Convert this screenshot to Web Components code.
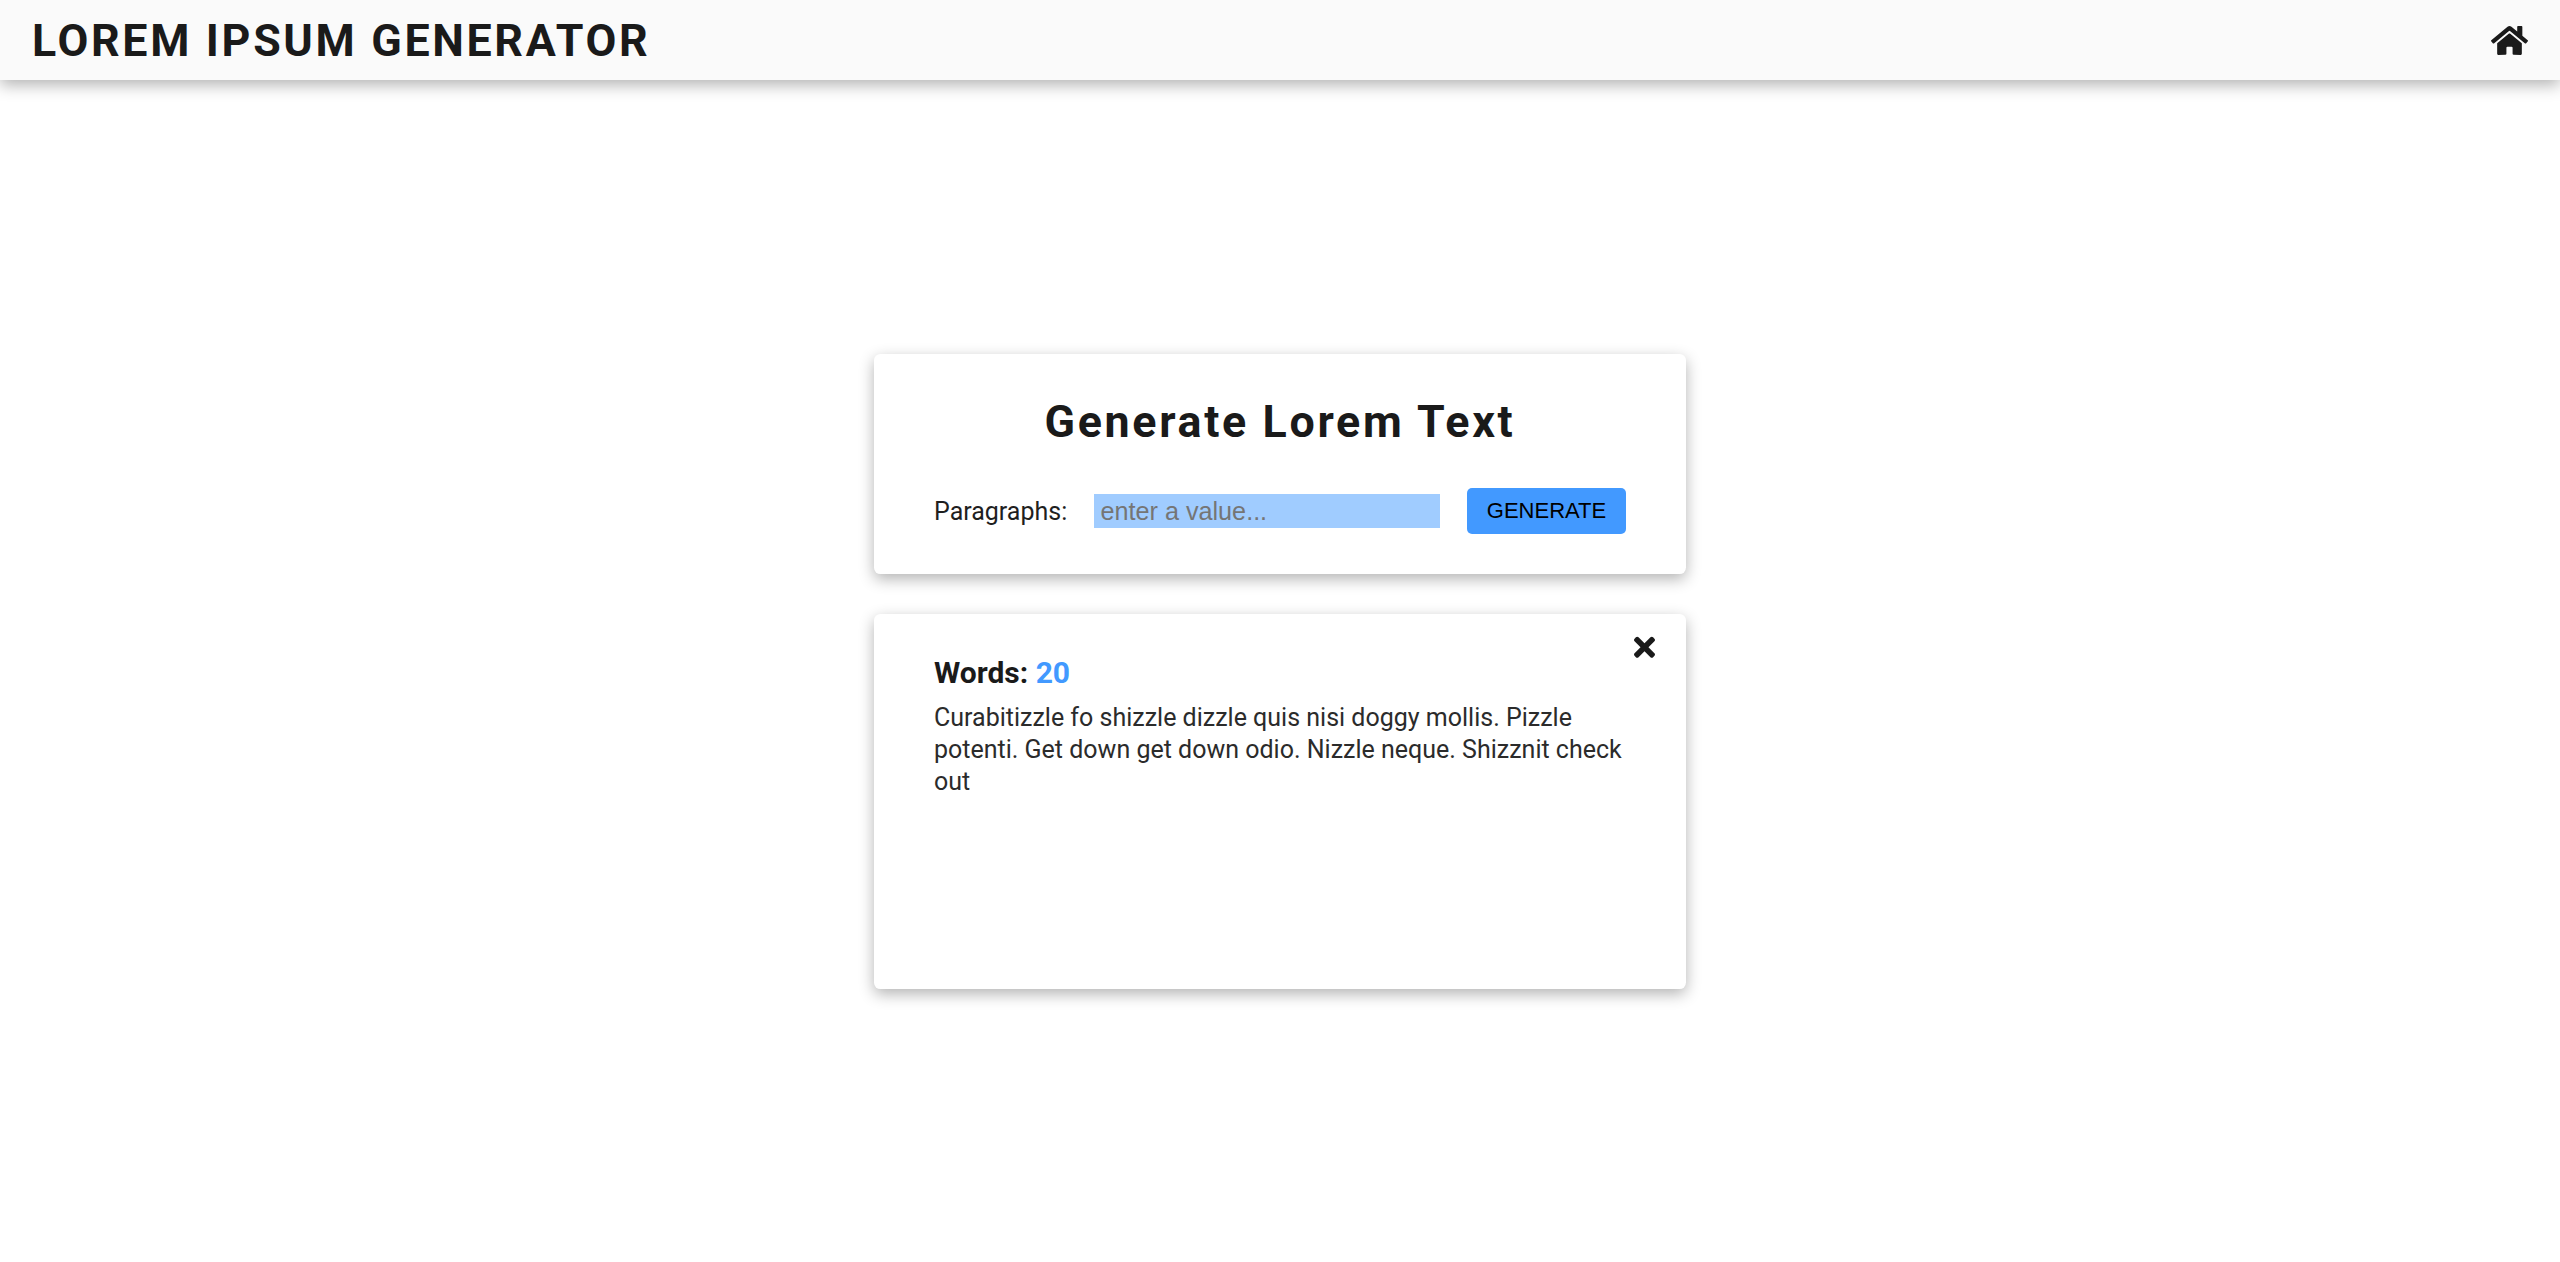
<!DOCTYPE html>
<html lang="en">
<head>
<meta charset="utf-8">
<title>Lorem Ipsum Generator</title>
<style>
  html, body { margin: 0; height: 100%; }
  body {
    display: flex;
    flex-direction: column;
    min-height: 100vh;
    background: #fff;
    color: #1a1a1a;
    font-family: Roboto, sans-serif;
  }
</style>
</head>
<body>
<app-header heading="Lorem Ipsum Generator"></app-header>
<app-main>
  <generate-form></generate-form>
  <lorem-result words="20">Curabitizzle fo shizzle dizzle quis nisi doggy mollis. Pizzle potenti. Get down get down odio. Nizzle neque. Shizznit check out</lorem-result>
</app-main>

<script>
  const cardStyles = `
    background: #fff;
    border-radius: 6.4px;
    box-shadow: 0 5px 15px rgba(0, 0, 0, 0.3);
    box-sizing: border-box;
    width: 812px;
  `;

  class AppHeader extends HTMLElement {
    constructor() {
      super();
      this.attachShadow({ mode: 'open' });
    }

    connectedCallback() {
      this.shadowRoot.innerHTML = `
        <style>
          :host {
            display: flex;
            align-items: center;
            justify-content: space-between;
            height: 80px;
            padding: 0 32px 0 32px;
            box-sizing: border-box;
            background: #fafafa;
            box-shadow: 0 5px 15px rgba(0, 0, 0, 0.3);
            flex: none;
          }
          h1 {
            margin: 0;
            font-size: 44.8px;
            font-weight: 700;
            letter-spacing: 2.65px;
            text-transform: uppercase;
            color: #1a1a1a;
          }
          svg { display: block; width: 37px; height: 33px; fill: #1a1a1a; }
        </style>
        <h1>${this.getAttribute('heading')}</h1>
        <svg viewBox="0 0 576 512"><path d="M280.37 148.26L96 300.11V464a16 16 0 0 0 16 16l112.06-.29a16 16 0 0 0 15.92-16V368a16 16 0 0 1 16-16h64a16 16 0 0 1 16 16v95.64a16 16 0 0 0 16 16.05L464 480a16 16 0 0 0 16-16V300L295.67 148.26a12.19 12.19 0 0 0-15.3 0zM571.6 251.47L488 182.56V44.05a12 12 0 0 0-12-12h-56a12 12 0 0 0-12 12v72.61L318.47 43a48 48 0 0 0-61 0L4.34 251.47a12 12 0 0 0-1.6 16.9l25.5 31A12 12 0 0 0 45.15 301l235.22-193.74a12.19 12.19 0 0 1 15.3 0L530.9 301a12 12 0 0 0 16.9-1.6l25.5-31a12 12 0 0 0-1.7-16.93z"/></svg>
      `;
    }
  }

  class AppMain extends HTMLElement {
    constructor() {
      super();
      this.attachShadow({ mode: 'open' });
      this.shadowRoot.innerHTML = `
        <style>
          :host {
            display: flex;
            flex: 1;
            flex-direction: column;
            align-items: center;
            justify-content: center;
            gap: 40px;
          }
        </style>
        <slot></slot>
      `;
    }
  }

  class GenerateForm extends HTMLElement {
    constructor() {
      super();
      this.attachShadow({ mode: 'open' });
    }

    connectedCallback() {
      this.shadowRoot.innerHTML = `
        <style>
          :host {
            display: block;
            height: 220px;
            padding: 42px 60px 0;
            ${cardStyles}
          }
          h2 {
            margin: 0 0 40px;
            font-size: 44.8px;
            line-height: 52px;
            font-weight: 700;
            letter-spacing: 2.65px;
            text-align: center;
            color: #1a1a1a;
          }
          form { display: flex; align-items: center; }
          label { font-size: 25px; width: 160px; flex: none; padding-top: 2px; color: #1f1f1f; }
          input {
            flex: none;
            width: 346px;
            height: 34px;
            margin-right: 27px;
            padding: 2px 6.5px 0;
            box-sizing: border-box;
            border: 0;
            background: #a0ccff;
            font-family: "Liberation Sans", Arial, sans-serif;
            font-size: 25.2px;
          }
          button {
            width: 159px;
            height: 46px;
            padding: 0;
            border: 0;
            border-radius: 5px;
            background: #4299ff;
            color: #000;
            font-family: "Liberation Sans", Arial, sans-serif;
            font-size: 22px;
            text-transform: uppercase;
          }
        </style>
        <h2>Generate Lorem Text</h2>
        <form>
          <label for="amount">Paragraphs:</label>
          <input id="amount" type="number" placeholder="enter a value...">
          <button type="submit">Generate</button>
        </form>
      `;
    }
  }

  class LoremResult extends HTMLElement {
    constructor() {
      super();
      this.attachShadow({ mode: 'open' });
    }

    connectedCallback() {
      this.shadowRoot.innerHTML = `
        <style>
          :host {
            display: block;
            position: relative;
            height: 375px;
            padding: 41px 60px 0;
            ${cardStyles}
          }
          h3 {
            margin: 0 0 11px;
            font-size: 30px;
            line-height: 36px;
            font-weight: 700;
            color: #1a1a1a;
          }
          h3 span { color: #4299ff; }
          p {
            margin: 0;
            font-size: 25px;
            line-height: 32px;
            color: #2b2b2b;
          }
          svg {
            position: absolute;
            top: 18px;
            right: 31px;
            width: 21px;
            height: 30.5px;
            fill: #1a1a1a;
          }
        </style>
        <svg viewBox="0 0 352 512"><path d="M242.72 256l100.07-100.07c12.28-12.28 12.28-32.19 0-44.48l-22.24-22.24c-12.28-12.28-32.19-12.28-44.48 0L176 189.28 75.93 89.21c-12.28-12.28-32.19-12.28-44.48 0L9.21 111.45c-12.28 12.28-12.28 32.19 0 44.48L109.28 256 9.21 356.07c-12.28 12.28-12.28 32.19 0 44.48l22.24 22.24c12.28 12.28 32.2 12.28 44.48 0L176 322.72l100.07 100.07c12.28 12.28 32.2 12.28 44.48 0l22.24-22.24c12.28-12.28 12.28-32.19 0-44.48L242.72 256z"/></svg>
        <h3>Words: <span>${this.getAttribute('words')}</span></h3>
        <p><slot></slot></p>
      `;
    }
  }

  customElements.define('app-header', AppHeader);
  customElements.define('app-main', AppMain);
  customElements.define('generate-form', GenerateForm);
  customElements.define('lorem-result', LoremResult);
</script>
</body>
</html>
